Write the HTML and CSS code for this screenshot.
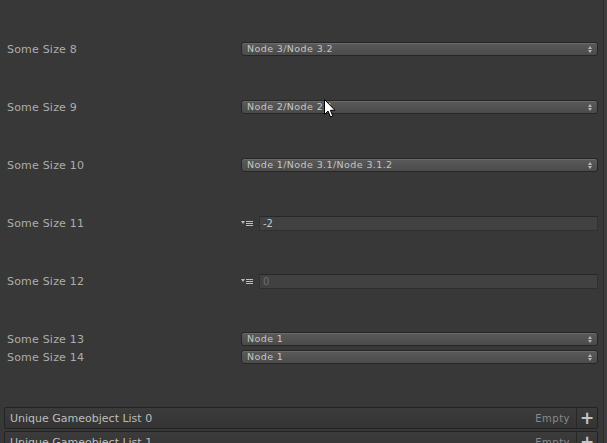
FILE: index.html
```html
<!DOCTYPE html>
<html>
<head>
<meta charset="utf-8">
<link rel="stylesheet" href="styles.css">
</head>
<body>
<div class="window">
  <div class="content">
    <div class="fields">
      <div class="row"><div class="label">Some Size 8</div><div class="popup"><span>Node 3/Node 3.2</span><i class="arrows"></i></div></div>
      <div class="row"><div class="label">Some Size 9</div><div class="popup"><span>Node 2/Node 2.1</span><i class="arrows"></i></div></div>
      <div class="row"><div class="label">Some Size 10</div><div class="popup"><span>Node 1/Node 3.1/Node 3.1.2</span><i class="arrows"></i></div></div>
      <div class="row"><div class="label">Some Size 11</div><div class="intwrap"><span class="drag"><i class="tri"></i><i class="lines"></i></span><div class="intfield">-2</div></div></div>
      <div class="row"><div class="label">Some Size 12</div><div class="intwrap"><span class="drag"><i class="tri"></i><i class="lines"></i></span><div class="intfield disabled">0</div></div></div>
      <div class="row tight"><div class="label">Some Size 13</div><div class="popup"><span>Node 1</span><i class="arrows"></i></div></div>
      <div class="row"><div class="label">Some Size 14</div><div class="popup"><span>Node 1</span><i class="arrows"></i></div></div>
    </div>
    <div class="lists">
      <div class="listhead"><span class="title">Unique Gameobject List 0</span><span class="empty">Empty</span><span class="plus">+</span></div>
      <div class="listhead"><span class="title">Unique Gameobject List 1</span><span class="empty">Empty</span><span class="plus">+</span></div>
    </div>
  </div>
  <div class="scrollbar"></div>
  <svg class="cursor" width="12" height="19" viewBox="0 0 12 19"><path d="M0.5 0.5 L0.5 15.5 L4 12 L6.5 18 L8.8 17 L6.4 11.3 L11 11.3 Z" fill="#fff" stroke="#000" stroke-width="1"/></svg>
</div>
</body>
</html>
```
FILE: styles.css
```css
html, body { margin: 0; padding: 0; }
body {
  width: 607px; height: 443px; overflow: hidden;
  background: #383838;
  font-family: "DejaVu Sans", sans-serif;
}
.window { position: relative; display: flex; width: 607px; height: 443px; }
.content { width: 603px; display: flex; flex-direction: column; }
.scrollbar { width: 4px; background: #3d3d3d; border-left: 1px solid #2c2c2c; box-sizing: border-box; }
.fields { padding-top: 41px; display: flex; flex-direction: column; gap: 42px; }
.row { display: flex; align-items: center; height: 16px; }
.row.tight { margin-bottom: -40px; }
.label {
  width: 241px; padding-left: 7px; box-sizing: border-box; flex: none;
  font-size: 11px; color: #adadad; letter-spacing: 0.2px;
}
.popup {
  width: 357px; height: 14px; box-sizing: border-box;
  border: 1px solid #262626; border-radius: 3px;
  background: linear-gradient(#5a5a5a, #4b4b4b);
  box-shadow: inset 0 1px 0 #6a6a6a;
  display: flex; align-items: center; padding-left: 5px; position: relative;
  font-size: 9.5px; color: #c6c6c6; letter-spacing: 0.4px;
}
.popup span { line-height: 12px; }
.arrows { position: absolute; right: 4px; top: 3px; width: 5px; height: 7px; }
.arrows::before, .arrows::after { content: ""; position: absolute; left: 0; border-left: 2.5px solid transparent; border-right: 2.5px solid transparent; }
.arrows::before { top: 0; border-bottom: 3px solid #b8b8b8; }
.arrows::after { bottom: 0; border-top: 3px solid #b8b8b8; }
.intwrap { display: flex; align-items: center; width: 357px; }
.drag { width: 18px; height: 15px; display: flex; align-items: center; gap: 1px; }
.tri { width: 0; height: 0; border-left: 2.5px solid transparent; border-right: 2.5px solid transparent; border-top: 3px solid #bdbdbd; margin-top: -1px; }
.lines { width: 7px; height: 5px; border-top: 1px solid #bdbdbd; border-bottom: 1px solid #bdbdbd; position: relative; box-sizing: border-box; }
.lines::after { content: ""; position: absolute; left: 0; right: 0; top: 1px; height: 1px; background: #bdbdbd; }
.intfield {
  flex: 1; height: 15px; box-sizing: border-box;
  background: #414141; border-top: 1px solid #282828; border-bottom: 1px solid #2f2f2f; border-left: 1px solid #303030; border-right: 1px solid #303030;
  font-size: 10px; color: #c8c8c8; padding-left: 3px; line-height: 13px;
}
.intfield.disabled { color: #6e6e6e; }
.lists { margin-top: 42px; padding-left: 4px; display: flex; flex-direction: column; gap: 2px; }
.listhead {
  width: 594px; height: 22px; box-sizing: border-box;
  border: 1px solid #232323; border-radius: 2px;
  background: linear-gradient(#3b3b3b, #343434);
  display: flex; align-items: center; font-size: 11px;
}
.title { flex: 1; padding-left: 5px; color: #bdbdbd; }
.empty { color: #8a8a8a; font-size: 10px; padding-right: 6px; letter-spacing: 0.5px; }
.plus {
  width: 21px; height: 20px; border-left: 1px solid #282828; box-sizing: border-box;
  display: flex; align-items: center; justify-content: center;
  font-size: 17px; font-weight: bold; color: #c4c4c4;
}
.cursor { position: absolute; left: 324px; top: 99px; }
```
